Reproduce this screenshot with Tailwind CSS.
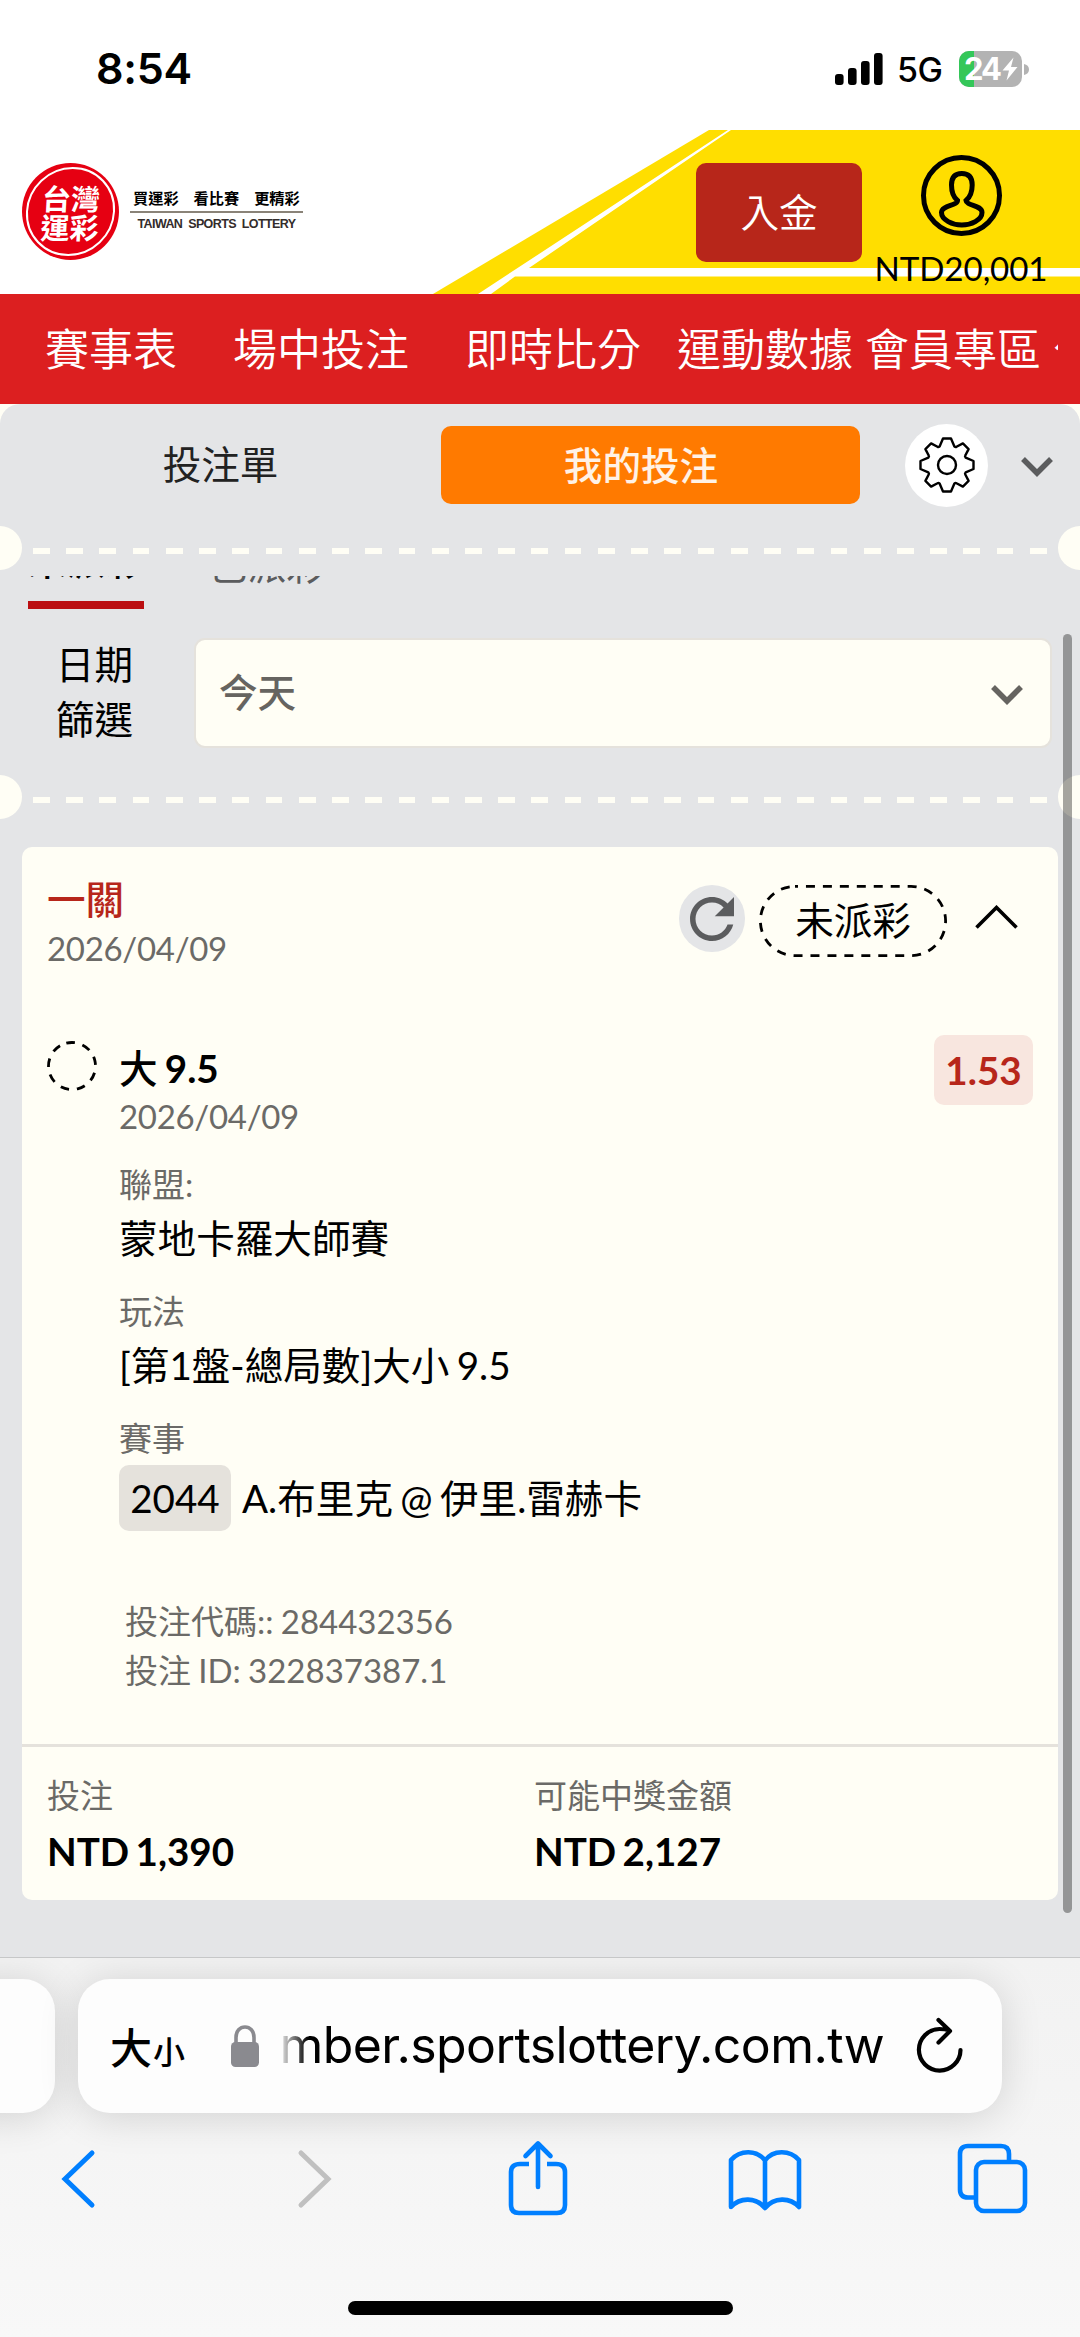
<!DOCTYPE html>
<html lang="zh-Hant">
<head>
<meta charset="utf-8">
<title>台灣運彩</title>
<script src="https://cdn.jsdelivr.net/npm/@tailwindcss/browser@4"></script>
</head>
<body class="w-[1080px] h-[2337px] overflow-hidden bg-white text-black font-['Lato','Noto_Sans_CJK_TC',sans-serif]">
<div class="relative flex flex-col w-[1080px] h-[2337px] overflow-hidden">

  <!-- Status bar -->
  <div class="h-[130px] shrink-0 flex items-start justify-between pl-[96px] pr-[51px] font-['Inter',sans-serif]">
    <div class="mt-[43px] h-[50px] leading-[50px] text-[43px] font-semibold tracking-[-0.300px]">8:54</div>
    <div class="mt-[48px] h-[42px] flex items-center">
      <svg class="w-[48px] h-[32px]" viewBox="0 0 48 32"><rect x="0" y="21" width="8.6" height="11" rx="3"/><rect x="13" y="15" width="8.6" height="17" rx="3"/><rect x="26" y="8" width="8.6" height="24" rx="3"/><rect x="39" y="0" width="8.6" height="32" rx="3"/></svg>
      <span class="ml-[14px] w-[62px] leading-[42px] text-[34px] font-medium tracking-[-0.5px] pt-[2px]">5G</span>
      <div class="relative w-[63px] h-[36px] rounded-[10px] overflow-hidden bg-[#b3b3b3]">
        <div class="w-[15px] h-full bg-[#34c759]"></div>
        <div class="absolute inset-0 flex items-center pl-[5px] text-white">
          <span class="text-[31px] leading-[36px] font-bold tracking-[-2px]">24</span>
          <svg class="w-[16px] h-[24px] ml-[2px]" viewBox="0 0 16 24"><path d="M11.5 0.5 0.5 13.5H7L4.5 23.5 15.5 10H9z" fill="#fff"/></svg>
        </div>
      </div>
      <svg class="w-[5px] h-[11px] ml-[2px]" viewBox="0 0 5 11"><path d="M0 0C3 .5 5 2.500 5 5.500S3 10.500 0 11z" fill="#b3b3b3"/></svg>
    </div>
  </div>

  <!-- Site header -->
  <header class="relative h-[163.500px] shrink-0 flex">
    <svg class="absolute inset-0 w-[1080px] h-[164px]" viewBox="0 0 1080 164">
      <path d="M433 164 709 0H1080V164z" fill="#ffde00"/>
      <path d="M478 164 728 0H731L529 138H1080V146.500H515L491 164z" fill="#fff"/>
    </svg>
    <div class="relative flex w-full">
      <div class="mt-[33px] ml-[22px] w-[97px] h-[97px] rounded-full bg-[#e60012] p-[4px]">
        <div class="w-full h-full rounded-full border-2 border-white flex flex-col items-center justify-center text-white font-bold text-[29px] leading-[29px] -skew-x-3 font-['Noto_Sans_CJK_TC',sans-serif]">
          <span>台灣</span><span>運彩</span>
        </div>
      </div>
      <div class="mt-[57px] ml-[11px] w-[173px]">
        <div class="h-[24px] pl-[3px] flex gap-[15px] text-[15.200px] leading-[21px] font-bold font-['Noto_Sans_CJK_TC',sans-serif] whitespace-nowrap"><span>買運彩</span><span>看比賽</span><span>更精彩</span></div>
        <div class="h-[2px] bg-[#8a8378]"></div>
        <div class="mt-[2px] text-center text-[12.500px] leading-[18px] font-bold text-[#332c2b] tracking-[-0.600px] [word-spacing:3px] font-['Liberation_Sans',sans-serif] whitespace-nowrap">TAIWAN SPORTS LOTTERY</div>
      </div>
      <div class="mt-[32.500px] ml-[393px] w-[166px] h-[99.500px] rounded-[10px] bg-[#b7261a] text-white text-[38.600px] leading-[98px] text-center font-[350]">入金</div>
      <div class="mt-[25px] ml-[12px] w-[174px] flex flex-col items-center">
        <svg class="w-[81px] h-[81px]" viewBox="0 0 81 81" fill="none" stroke="#000" stroke-width="5"><circle cx="40.500" cy="40.500" r="38"/><path d="M36.500 45.500C31.500 41.500 30.500 36 30.500 30C30.500 22 34 18.500 40.800 18.500S51.200 22 51.200 30C51.200 36 50 41.500 45 45.500C45.500 51 61 50 61 57.500C61 65 50 70 40.800 70S20.500 65 20.500 57.500C20.500 50 36.500 51 36.500 45.500Z"/></svg>
        <div class="mt-[10px] text-[33.200px] leading-[44px] tracking-[-0.100px]">NTD20,001</div>
      </div>
    </div>
  </header>

  <!-- Main navigation -->
  <nav class="h-[110.500px] shrink-0 bg-[#dc1f20] pl-[45px] pr-[22px]">
    <div class="flex overflow-hidden whitespace-nowrap text-white text-[44px] leading-[110px] font-[350]">
      <span class="shrink-0">賽事表</span><span class="shrink-0 ml-[56px]">場中投注</span><span class="shrink-0 ml-[56px]">即時比分</span><span class="shrink-0 ml-[36px]">運動數據</span><span class="shrink-0 ml-[12px]">會員專區</span><span class="shrink-0 ml-[12px]">公益</span>
    </div>
  </nav>

  <!-- Bet slip panel -->
  <main class="relative h-[1553px] shrink-0 bg-[#fffef5]">
    <div class="h-full bg-[#e4e5e7] rounded-t-[20px] flex flex-col">
      <div class="h-[122px] shrink-0 flex items-center text-[38.600px]">
        <div class="w-[441px] text-center text-[#222]">投注單</div>
        <div class="w-[419px] h-[78px] pr-[19px] rounded-[10px] bg-[#ff7a00] text-center leading-[78px] font-medium text-white/90">我的投注</div>
        <div class="ml-[45px] w-[83px] h-[83px] rounded-full bg-white flex items-center justify-center">
          <svg class="w-[58px] h-[58px]" viewBox="-29 -29 58 58" fill="none" stroke="#000" stroke-width="2.400" stroke-linejoin="round"><circle r="9"/><path d="M-4-26.500H4L7.300-18.700Q8.500-17.600 9.500-18.300L15.900-21.600 21.600-15.900 18.300-9.500Q17.600-8.500 18.700-7.300L26.500-4V4L18.700 7.300Q17.600 8.500 18.300 9.500L21.600 15.900 15.900 21.600 9.500 18.300Q8.500 17.600 7.300 18.700L4 26.500H-4L-7.300 18.700Q-8.500 17.600-9.500 18.300L-15.900 21.600-21.600 15.900-18.300 9.500Q-17.600 8.500-18.700 7.300L-26.500 4V-4L-18.700-7.300Q-17.600-8.500-18.300-9.500L-21.600-15.900-15.900-21.600-9.500-18.300Q-8.500-17.600-7.300-18.700z"/></svg>
        </div>
        <svg class="ml-[33px] mt-[4px] w-[32px] h-[20px]" viewBox="0 0 32 20" fill="none" stroke="#5b5c5e" stroke-width="5.500"><path d="M2 2 16 16 30 2"/></svg>
      </div>

      <div class="h-[44px] shrink-0 flex items-center overflow-hidden">
        <div class="w-[44px] h-[44px] -ml-[22px] shrink-0 rounded-full bg-[#fffef5]"></div>
        <div class="ml-[11px] mt-[6px] w-[1014px] h-[6px] shrink-0 bg-[repeating-linear-gradient(to_right,#fffef5_0_16.800px,transparent_16.800px_33.230px)]"></div>
        <div class="ml-[11px] w-[44px] h-[44px] shrink-0 rounded-full bg-[#fffef5]"></div>
      </div>

      <div class="mt-[6px] h-[33px] shrink-0 overflow-hidden flex items-end pl-[28px] text-[38.600px]">
        <div class="h-[76px] w-[116px] shrink-0 border-b-8 border-[#bb0f12] leading-[54px] font-medium whitespace-nowrap">未派彩</div>
        <div class="h-[76px] ml-[65px] leading-[64px] text-[#5b5c5e] whitespace-nowrap">已派彩</div>
      </div>

      <div class="mt-[29px] h-[110px] shrink-0 flex items-center">
        <div class="w-[133px] pl-[50px] pb-[2px] text-right text-[38.600px] leading-[55px]">日期<br>篩選</div>
        <div class="ml-[61px] w-[858px] h-[110px] rounded-[11px] border-[2.500px] border-[#e5e2dc] bg-[#fffef5] flex items-center justify-between pl-[23px] pr-[27px] text-[38.600px] text-[#666460] font-medium">
          <span class="pb-[1px]">今天</span>
          <svg class="mt-[4px] w-[32px] h-[20px]" viewBox="0 0 32 20" fill="none" stroke="#666460" stroke-width="5.500"><path d="M2 2 16 16 30 2"/></svg>
        </div>
      </div>

      <div class="mt-[27px] h-[44px] shrink-0 flex items-center overflow-hidden">
        <div class="w-[44px] h-[44px] -ml-[22px] shrink-0 rounded-full bg-[#fffef5]"></div>
        <div class="ml-[11px] mt-[6px] w-[1014px] h-[6px] shrink-0 bg-[repeating-linear-gradient(to_right,#fffef5_0_16.800px,transparent_16.800px_33.230px)]"></div>
        <div class="ml-[11px] w-[44px] h-[44px] shrink-0 rounded-full bg-[#fffef5]"></div>
      </div>

      <!-- Bet card -->
      <section class="mt-[28px] ml-[22px] w-[1036px] h-[1053px] shrink-0 rounded-[10px] bg-[#fffef5] flex flex-col">
        <div class="pt-[29px] pl-[25px] pr-[40px] flex justify-between">
          <div>
            <div class="text-[38.600px] leading-[47px] font-medium text-[#b7261a]">一關</div>
            <div class="mt-[1px] text-[33px] leading-[48px] text-[#6b6a67] tracking-[-0.300px]">2026/04/09</div>
          </div>
          <div class="mt-[9px] flex items-start">
            <div class="w-[66px] h-[67px] rounded-full bg-[#e4e5e7] flex items-center justify-center">
              <svg class="w-[66px] h-[66px]" viewBox="0 0 24 24" fill="#5b5c5e"><path d="M17.650 6.350C16.200 4.900 14.210 4 12 4c-4.420 0-7.990 3.580-7.990 8s3.570 8 7.990 8c3.730 0 6.840-2.550 7.730-6h-2.080c-.82 2.330-3.040 4-5.650 4-3.310 0-6-2.690-6-6s2.690-6 6-6c1.660 0 3.140.69 4.220 1.780L13 11h7V4l-2.350 2.350z"/></svg>
            </div>
            <div class="relative ml-[14px] w-[188px] h-[72px] text-center text-[38.600px] leading-[71px]">
              <svg class="absolute inset-0 w-[188px] h-[72px]" viewBox="0 0 188 72" fill="none" stroke="#000" stroke-width="2.800"><rect x="1.400" y="1.400" width="185.200" height="69.200" rx="34.600" stroke-dasharray="9 7.950" stroke-dashoffset="6"/></svg>
              未派彩
            </div>
            <svg class="ml-[28px] mt-[20px] w-[43px] h-[24px]" viewBox="0 0 43 24" fill="none" stroke="#000" stroke-width="3.600"><path d="M1.500 22.500 21.500 2.500 41.500 22.500"/></svg>
          </div>
        </div>

        <div class="mt-[63px] pl-[25px] pr-[25px] flex">
          <svg class="mt-[6px] w-[50px] h-[50px]" viewBox="0 0 50 50" fill="none" stroke="#000" stroke-width="2.800"><circle cx="25" cy="25" r="23.500" stroke-dasharray="8.600 7.806" transform="rotate(-104 25 25)"/></svg>
          <div class="ml-[22px] mt-[9px] flex-1 text-[38.600px] [word-spacing:-2.500px]">
            <div class="leading-[48px] font-medium">大 <span class="font-bold">9.5</span></div>
            <div class="text-[33px] leading-[49px] text-[#6b6a67] tracking-[-0.300px]">2026/04/09</div>
            <div class="mt-[16px] text-[33px] leading-[54px] text-[#6b6a67]">聯盟:</div>
            <div class="leading-[54px]">蒙地卡羅大師賽</div>
            <div class="mt-[19px] text-[33px] leading-[54px] text-[#6b6a67]">玩法</div>
            <div class="leading-[54px]">[第1盤-總局數]大小 9.5</div>
            <div class="mt-[20px] text-[33px] leading-[53px] text-[#6b6a67]">賽事</div>
            <div class="flex items-center h-[66px]">
              <span class="w-[112px] h-[66px] rounded-[10px] bg-[#e5e2dc] text-center leading-[66px]">2044</span>
              <span class="ml-[11px] leading-[65px] whitespace-nowrap">A.布里克 @ 伊里.雷赫卡</span>
            </div>
            <div class="mt-[66px] pl-[6px] text-[33px] leading-[49px] text-[#6b6a67] [word-spacing:-1.200px]">投注代碼:: 284432356<br>投注 ID: 322837387.1</div>
          </div>
          <div class="w-[99px] h-[70px] rounded-[10px] bg-[#f8e6df] text-center text-[38.600px] leading-[70px] font-bold text-[#b7261a]">1.53</div>
        </div>

        <div class="mt-auto h-[156px] border-t-[3px] border-[#e5e2dc] flex pl-[25px] pt-[21px] text-[38.600px] [word-spacing:-3px]">
          <div class="w-[487px]"><div class="text-[33px] leading-[55px] text-[#6b6a67]">投注</div><div class="leading-[56px] font-bold">NTD 1,390</div></div>
          <div><div class="text-[33px] leading-[55px] text-[#6b6a67]">可能中獎金額</div><div class="leading-[56px] font-bold">NTD 2,127</div></div>
        </div>
      </section>
    </div>
    <div class="absolute right-[8px] top-[230px] w-[9px] h-[1279px] rounded-full bg-black/35"></div>
  </main>

  <!-- Browser toolbar -->
  <footer class="flex-1 overflow-hidden border-t border-[#c6c7c8] bg-gradient-to-b from-[#f2f2f2] via-[#f5f5f5] to-[#f8f8f8] flex flex-col">
    <div class="mt-[21px] flex h-[134px] shrink-0">
      <div class="-ml-[60px] w-[115px] shrink-0 rounded-[32px] bg-[#fdfdfd] shadow-[0_4px_40px_rgba(0,0,0,0.14)]"></div>
      <div class="ml-[23px] w-[924px] shrink-0 rounded-[32px] bg-[#fdfdfd] shadow-[0_4px_40px_rgba(0,0,0,0.14)] flex items-center pl-[32px]">
        <div class="w-[121px] pb-[2px] flex items-baseline font-medium font-['Noto_Sans_CJK_TC',sans-serif]"><span class="text-[42px]">大</span><span class="text-[32px] ml-[1px]">小</span></div>
        <svg class="w-[28px] h-[42px]" viewBox="0 0 28 42"><rect y="17" width="28" height="25" rx="4.500" fill="#8a8a8f"/><path d="M5 19V12.500C5 6 9 2 14 2S23 6 23 12.500V19" fill="none" stroke="#8a8a8f" stroke-width="3.600"/></svg>
        <div class="ml-[15px] w-[610px] flex justify-end overflow-hidden whitespace-nowrap font-['Inter',sans-serif] text-[50px] leading-[68px] pb-[2px] tracking-[-0.600px] [mask-image:linear-gradient(to_right,transparent_4px,black_34px)]">member.sportslottery.com.tw</div>
        <svg class="ml-[31px] w-[50px] h-[58px]" viewBox="0 0 50 58" fill="none" stroke="#000" stroke-width="4.200" stroke-linecap="round" stroke-linejoin="round"><path d="M45.500 33A20.800 20.800 0 1 1 24.500 12Q30 12 34.500 13.500M23.500 3 35 14 23.500 25.500"/></svg>
      </div>
    </div>
    <div class="mt-[26px] h-[80px] shrink-0 flex items-center text-[#007fff]">
      <svg class="ml-[60px] w-[36px] h-[60px]" viewBox="0 0 36 60" fill="none" stroke="currentColor" stroke-width="5" stroke-linecap="round" stroke-linejoin="miter"><path d="M32 4 5 30 32 56"/></svg>
      <svg class="ml-[201px] w-[36px] h-[60px]" viewBox="0 0 36 60" fill="none" stroke="#c0c0c0" stroke-width="5" stroke-linecap="round"><path d="M4 4 31 30 4 56"/></svg>
      <svg class="ml-[172px] w-[66px] h-[78px]" viewBox="0 0 66 78" fill="none" stroke="currentColor" stroke-width="4.600" stroke-linecap="round" stroke-linejoin="round"><path d="M24 24H15Q6 24 6 32V65Q6 73 14 73H52Q60 73 60 65V32Q60 24 51 24H42" stroke-linecap="butt"/><path d="M33 47V4M20.500 16 33 3.500 45.500 16"/></svg>
      <svg class="ml-[155px] w-[78px] h-[66px]" viewBox="0 0 78 66" fill="none" stroke="currentColor" stroke-width="4.600" stroke-linejoin="round"><path d="M39 14.500C31 3.500 14 3.500 5 14V61C14 51 30 51 39 62C48 51 64 51 73 61V14C64 3.500 47 3.500 39 14.500ZM39 14.500V62"/></svg>
      <svg class="ml-[152px] w-[74px] h-[74px]" viewBox="0 0 74 74" fill="none" stroke="currentColor" stroke-width="4.600"><path d="M20 55.500H12Q4 55.500 4 47.500V12Q4 4 12 4H45Q53 4 53 12V20"/><rect x="20" y="20" width="49" height="49" rx="8"/></svg>
    </div>
    <div class="mt-auto mb-[22px] ml-[348px] w-[385px] h-[14px] shrink-0 rounded-full bg-black"></div>
  </footer>
</div>
</body>
</html>
